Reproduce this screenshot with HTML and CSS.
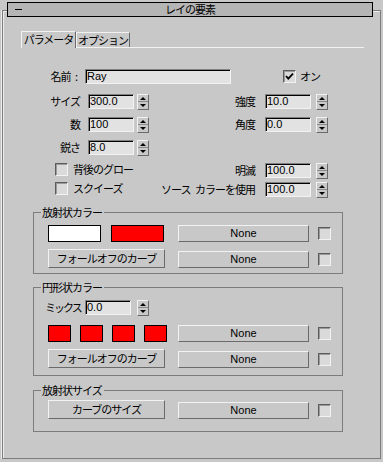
FILE: index.html
```html
<!DOCTYPE html>
<html lang="ja">
<head>
    <meta charset="UTF-8">
    <meta name="viewport" content="width=device-width, initial-scale=1.0">
    <title>レイの要素</title>
    <link rel="stylesheet" href="styles.css">
</head>
<body>
    <div class="rollout">
        <div class="titlebar">
            <span class="collapse"></span>
            <span class="title">レイの要素</span>
        </div>

        <div class="tabs">
            <div class="tab active">パラメータ</div>
            <div class="tab">オプション</div>
        </div>

        <!-- parameters -->
        <div class="row name-row">
            <span class="lbl">名前 :</span>
            <span class="field name-field">Ray</span>
            <span class="check on-check">
                <svg width="11" height="11" viewBox="0 0 11 11"><path d="M2 5 L4.3 7.6 L9 2.6" stroke="#000" stroke-width="1.8" fill="none"/></svg>
            </span>
            <span class="check-text">オン</span>
        </div>
        <div class="row size-row">
            <span class="lbl">サイズ</span>
            <span class="field">300.0</span>
            <span class="spin"><i class="up"></i><i class="down"></i></span>
            <span class="lbl-right">強度</span>
            <span class="field">10.0</span>
            <span class="spin"><i class="up"></i><i class="down"></i></span>
        </div>
        <div class="row">
            <span class="lbl">数</span>
            <span class="field">100</span>
            <span class="spin"><i class="up"></i><i class="down"></i></span>
            <span class="lbl-right">角度</span>
            <span class="field">0.0</span>
            <span class="spin"><i class="up"></i><i class="down"></i></span>
        </div>
        <div class="row">
            <span class="lbl">鋭さ</span>
            <span class="field">8.0</span>
            <span class="spin"><i class="up"></i><i class="down"></i></span>
        </div>
        <div class="row">
            <span class="check-cell"><span class="check"></span><span class="check-text">背後のグロー</span></span>
            <span class="lbl-right">明滅</span>
            <span class="field">100.0</span>
            <span class="spin"><i class="up"></i><i class="down"></i></span>
        </div>
        <div class="row tight">
            <span class="check-cell"><span class="check"></span><span class="check-text">スクイーズ</span></span>
            <span class="lbl-right">ソース カラーを使用</span>
            <span class="field">100.0</span>
            <span class="spin"><i class="up"></i><i class="down"></i></span>
        </div>

        <!-- radial color -->
        <div class="group g-radial">
            <span class="legend">放射状カラー</span>
            <div class="grid two">
                <div class="swatches">
                    <span class="swatch long white"></span>
                    <span class="swatch long red"></span>
                </div>
                <span class="btn none">None</span>
                <span class="check side"></span>
                <span class="btn curve">フォールオフのカーブ</span>
                <span class="btn none">None</span>
                <span class="check side"></span>
            </div>
        </div>

        <!-- circular color -->
        <div class="group g-circular">
            <span class="legend">円形状カラー</span>
            <div class="mix-row">
                <span class="mix-lbl">ミックス</span>
                <span class="field">0.0</span>
                <span class="spin"><i class="up"></i><i class="down"></i></span>
            </div>
            <div class="grid two">
                <div class="swatches small">
                    <span class="swatch short red"></span>
                    <span class="swatch short red"></span>
                    <span class="swatch short red"></span>
                    <span class="swatch short red"></span>
                </div>
                <span class="btn none">None</span>
                <span class="check side"></span>
                <span class="btn curve">フォールオフのカーブ</span>
                <span class="btn none">None</span>
                <span class="check side"></span>
            </div>
        </div>

        <!-- radial size -->
        <div class="group g-size">
            <span class="legend">放射状サイズ</span>
            <div class="grid one">
                <span class="btn curve">カーブのサイズ</span>
                <span class="btn none">None</span>
                <span class="check side"></span>
            </div>
        </div>
    </div>
</body>
</html>
```

FILE: styles.css
```css
body {
    margin: 0;
    background: #c8c8c8;
    font-family: "Noto Sans CJK JP", sans-serif;
    font-size: 11px;
    letter-spacing: -1px;
    word-spacing: 3px;
    color: #000;
}
.rollout {
    margin: 10px 2px 0 2px;
    height: 449px;
    box-sizing: border-box;
    border: 1px solid #7c7c7c;
    box-shadow: -1px 0 0 #ececec, inset 1px 1px 0 #ececec;
}
.titlebar {
    display: flex;
    align-items: center;
    margin: -9px 7px 0 4px;
    height: 15px;
    box-sizing: border-box;
    border: 1px solid #000;
    background: #b5b5b5;
}
.collapse {
    width: 7px;
    height: 1px;
    margin: 0 0 1px 7px;
    background: #000;
}
.title {
    flex: 1;
    text-align: center;
    margin-right: 14px;
    line-height: 13px;
}

/* tabs */
.tabs {
    display: flex;
    align-items: flex-end;
    margin: 14px 16px 0 18px;
    height: 16px;
    border-bottom: 1px solid #f2f2f2;
}
.tab {
    width: 54px;
    height: 15px;
    box-sizing: border-box;
    border-top: 1px solid #f2f2f2;
    border-left: 1px solid #f2f2f2;
    border-right: 1px solid #6a6a6a;
    text-align: center;
    line-height: 14px;
}
.tab.active {
    width: 55px;
    height: 17px;
    margin-bottom: -1px;
    background: #c8c8c8;
    line-height: 15px;
}

/* parameter rows */
.row {
    display: flex;
    align-items: flex-start;
    height: 16px;
    margin-top: 7px;
}
.row.name-row {
    margin-top: 21px;
}
.row.size-row {
    margin-top: 9px;
}
.row.tight {
    margin-top: 3px;
}
.lbl {
    flex: none;
    width: 77px;
    text-align: right;
    line-height: 15px;
}
.name-row .lbl {
    padding-right: 3px;
    box-sizing: border-box;
}
.lbl-right {
    flex: none;
    width: 106px;
    text-align: right;
    line-height: 15px;
    white-space: nowrap;
}
.field {
    flex: none;
    width: 46px;
    height: 15px;
    box-sizing: border-box;
    padding-left: 1px;
    background: #e2e2e2;
    border: 1px solid;
    border-color: #808080 #f2f2f2 #f2f2f2 #808080;
    box-shadow: inset 1px 1px 0 #000;
    font-family: "Liberation Sans", sans-serif;
    font-size: 11px;
    letter-spacing: 0;
    word-spacing: 0;
    line-height: 13px;
}
.row .field {
    margin-left: 8px;
}
.row .name-field {
    width: 146px;
    margin-left: 5px;
}
.row .lbl-right + .field {
    margin-left: 10px;
}
.spin {
    flex: none;
    display: flex;
    flex-direction: column;
    align-items: center;
    justify-content: space-around;
    width: 12px;
    height: 16px;
    box-sizing: border-box;
    margin-left: 3px;
    border: 1px solid;
    border-color: #f2f2f2 #6a6a6a #6a6a6a #f2f2f2;
    background: linear-gradient(#c8c8c8 6px, #8a8a8a 6px, #8a8a8a 7px, #c8c8c8 7px);
}
.lbl-right ~ .spin {
    margin-left: 5px;
}
.up, .down {
    width: 0;
    height: 0;
    border-left: 3px solid transparent;
    border-right: 3px solid transparent;
}
.up {
    border-bottom: 3px solid #000;
}
.down {
    border-top: 3px solid #000;
}

/* checkboxes */
.check {
    flex: none;
    display: block;
    width: 13px;
    height: 13px;
    box-sizing: border-box;
    border: 1px solid;
    border-color: #5c5c5c #f2f2f2 #f2f2f2 #5c5c5c;
    box-shadow: inset 1px 1px 0 #9a9a9a;
    background: #dadada;
}
.check svg {
    display: block;
}
.on-check {
    margin: 1px 0 0 52px;
}
.check-text {
    margin-left: 4px;
    line-height: 15px;
}
.check-cell {
    flex: none;
    display: flex;
    align-items: center;
    width: 146px;
    height: 13px;
    padding-left: 52px;
    box-sizing: border-box;
}
.check-cell .check-text {
    margin-left: 5px;
}

/* groups */
.group {
    position: relative;
    width: 310px;
    box-sizing: border-box;
    margin-left: 30px;
    padding: 12px 0 5px 14px;
    border: 1px solid #7c7c7c;
}
.g-radial {
    margin-top: 14px;
}
.g-circular {
    margin-top: 13px;
    padding-bottom: 7px;
}
.g-size {
    margin-top: 14px;
    padding-top: 9px;
    padding-bottom: 12px;
}
.legend {
    position: absolute;
    left: 7px;
    top: -7px;
    padding: 0 2px 0 1px;
    background: #c8c8c8;
    line-height: 12px;
}
.grid {
    display: grid;
    grid-template-columns: 130px 131px 22px;
    row-gap: 7px;
    align-items: end;
}
.grid.two {
    grid-template-rows: 17px 19px;
}
.grid.one {
    grid-template-rows: 19px;
}
.grid .check.side {
    justify-self: end;
    margin-bottom: 2px;
}
.swatches {
    display: flex;
    gap: 10px;
    height: 17px;
}
.swatches.small {
    gap: 9px;
}
.swatch {
    height: 17px;
    box-sizing: border-box;
    border: 1px solid #000;
}
.swatch.long {
    width: 53px;
}
.swatch.short {
    width: 23px;
}
.white {
    background: #fff;
}
.red {
    background: #ff0000;
}
.btn {
    display: block;
    box-sizing: border-box;
    border: 1px solid;
    border-color: #f2f2f2 #6a6a6a #6a6a6a #f2f2f2;
    background: #c8c8c8;
    text-align: center;
}
.btn.none {
    width: 131px;
    height: 17px;
    font-family: "Liberation Sans", sans-serif;
    font-size: 11px;
    letter-spacing: 0;
    line-height: 15px;
}
.btn.curve {
    width: 117px;
    height: 19px;
    line-height: 17px;
}
.mix-row {
    display: flex;
    height: 16px;
    margin: 0 0 9px -3px;
}
.mix-lbl {
    width: 40px;
    letter-spacing: -2px;
    line-height: 15px;
}
.mix-row .spin {
    margin-left: 6px;
}
```
